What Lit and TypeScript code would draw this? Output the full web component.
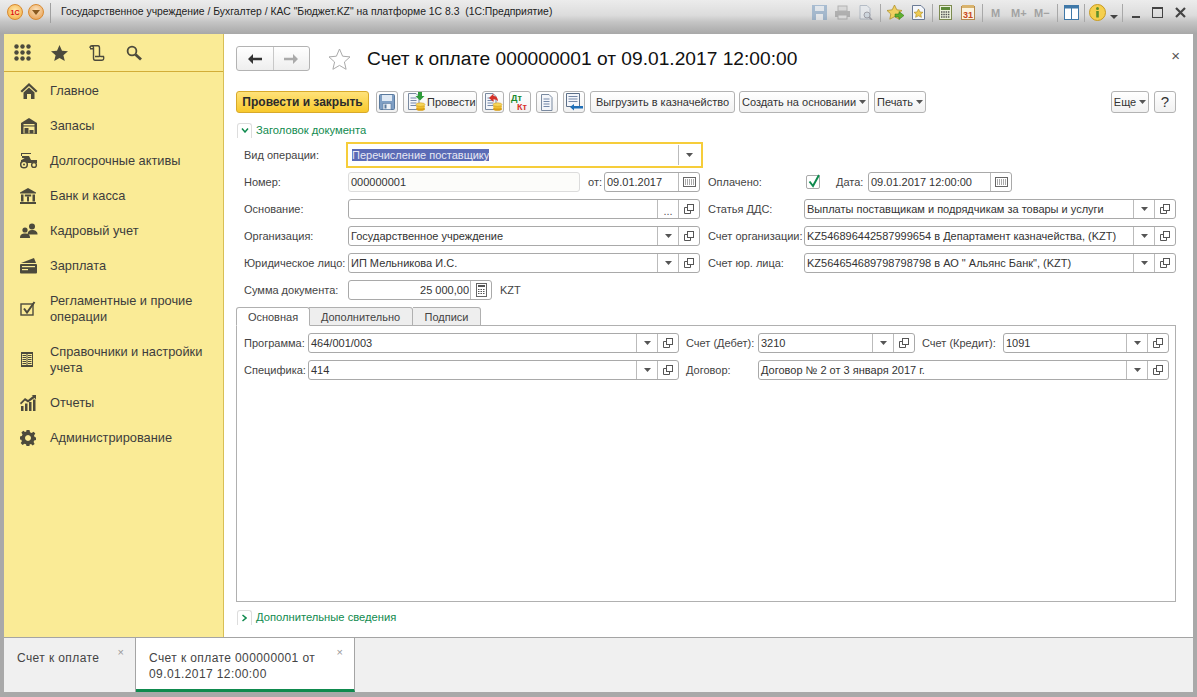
import { LitElement, html, svg, css } from "lit";
import { customElement } from "lit/decorators.js";

const I = "#4c4a3c";
const copyIcon = html`<svg width="12" height="12" viewBox="0 0 12 12" fill="none" stroke="#555"><rect x="4.5" y="1.5" width="6" height="6" fill="#fff"/><path d="M4.5 4.5H1.5V10.5H7.5V7.5"/></svg>`;
const drop = html`<svg width="7" height="4" viewBox="0 0 7 4"><path d="M0 0H7L3.5 4Z" fill="#555"/></svg>`;
const calIcon = html`<svg width="13" height="10" viewBox="0 0 13 10"><rect x=".5" y=".5" width="12" height="9" fill="#fff" stroke="#666"/><path d="M2 3h9M2 5h9M2 7h9" stroke="#555" stroke-dasharray="1 1"/></svg>`;
const calcIcon = html`<svg width="11" height="14" viewBox="0 0 11 14"><rect x=".5" y=".5" width="10" height="13" fill="#fff" stroke="#666"/><path d="M2 3h7" stroke="#555" stroke-width="2"/><path d="M2 6.5h7M2 8.5h7M2 10.5h7" stroke="#555" stroke-dasharray="1.5 1"/></svg>`;

const coins = svg`<ellipse cx="14.5" cy="17" rx="4.5" ry="1.8" fill="#d99f16"/><ellipse cx="14.5" cy="14.8" rx="4.5" ry="1.8" fill="#f0bf30"/><ellipse cx="14.5" cy="12.6" rx="4.5" ry="1.8" fill="#f7d65a" stroke="#c9921a" stroke-width=".5"/>`;
const docBase = svg`<path d="M2.5 1.5H10L13 4.5V17.5H2.5Z" fill="#f4f6fa" stroke="#7a8aa0"/><path d="M4.5 6h6M4.5 8.5h6M4.5 11h6M4.5 13.5h6" stroke="#7488a8"/>`;

const toolIcons = {
  save: html`<svg width="18" height="18" viewBox="0 0 18 18"><rect x="1.5" y="1.5" width="15" height="15" rx="1" fill="#7f9fc4" stroke="#5a7a9e"/><rect x="4" y="2" width="10" height="6" fill="#dfe9f4"/><rect x="5" y="10.5" width="8" height="6" fill="#eef2f7" stroke="#5a7a9e" stroke-width=".6"/><rect x="6.5" y="11.5" width="2" height="4" fill="#5a7a9e"/></svg>`,
  post: html`<svg width="20" height="20" viewBox="0 0 20 20">${docBase}${coins}<path d="M12 0V4H9.5L14 8.5L18.5 4H16V0Z" fill="#2f9b3a"/></svg>`,
  unpost: html`<svg width="20" height="20" viewBox="0 0 20 20">${docBase}${coins}<path d="M6 6L10.5 1.5V4C13.5 4 15 6 15 9.5C14 8 12.5 7.2 10.5 7.2V10Z" fill="#d4322a"/></svg>`,
  dtkt: html`<svg width="20" height="20" viewBox="0 0 20 20"><text class="dt" x="1" y="9">Дт</text><text class="kt" x="7" y="18">Кт</text></svg>`,
  list: html`<svg width="16" height="18" viewBox="0 0 16 18">${docBase}</svg>`,
  out: html`<svg width="20" height="20" viewBox="0 0 20 20"><path d="M2.5 1.5H15.5V14.5H2.5Z" fill="#f4f6fa" stroke="#5c6f88"/><path d="M4.5 4.5h9M4.5 7h9M4.5 9.5h9" stroke="#7488a8"/><path d="M6 15L10 12V14H19V16.5H10V18.5Z" fill="#1f6fb8"/></svg>`,
};

const navIcons = [
  html`<svg width="18" height="18" viewBox="0 0 18 18" fill="${I}"><path d="M9 1L0.5 9L2 10.5L9 4L16 10.5L17.5 9Z"/><path d="M3.5 10.5L9 5.5L14.5 10.5V17H11V12H7V17H3.5Z"/></svg>`,
  html`<svg width="18" height="18" viewBox="0 0 18 18" fill="${I}"><path d="M1 6L9 1L17 6V17H1Z"/><rect x="3.5" y="7" width="11" height="1.4" fill="#faeb96"/><rect x="3.5" y="9.5" width="11" height="7" fill="#faeb96"/><rect x="4.5" y="11" width="4" height="5.5"/><rect x="9.5" y="13" width="4" height="3.5"/></svg>`,
  html`<svg width="18" height="16" viewBox="0 0 18 16"><g fill="${I}"><path d="M1 3H8V1H11V0H1ZM2 1H8V5H2ZM8 3H9L11 7H17V10H1V7H1.5Z"/></g><circle cx="4" cy="11.5" r="3.3" fill="#faeb96" stroke="${I}" stroke-width="1.5"/><circle cx="4" cy="11.5" r="1" fill="${I}"/><circle cx="14" cy="12" r="2.4" fill="#faeb96" stroke="${I}" stroke-width="1.4"/></svg>`,
  html`<svg width="16" height="16" viewBox="0 0 16 16" fill="${I}"><path d="M8 0L16 4.5V5.5H0V4.5Z"/><rect x="1" y="6.5" width="2.5" height="7"/><rect x="12.5" y="6.5" width="2.5" height="7"/><rect x="4.8" y="6.5" width="6.4" height="2"/><rect x="7" y="8.5" width="2" height="5"/><rect y="14" width="16" height="2"/></svg>`,
  html`<svg width="18" height="15" viewBox="0 0 18 15" fill="${I}"><circle cx="12" cy="3.5" r="3"/><path d="M7.5 12C7.5 8.5 9 7 12 7S17.5 8.5 17.5 11V11.5H9.5Z"/><circle cx="5" cy="7" r="2.6"/><path d="M0 15C0 11.5 2 10.5 5 10.5S10 11.5 10 15Z"/></svg>`,
  html`<svg width="17" height="16" viewBox="0 0 17 16" fill="${I}"><path d="M1 5L14 0L16 5Z"/><rect x="0" y="6" width="17" height="9.5" rx="1"/><rect x="2" y="8" width="13" height="1.2" fill="#faeb96"/><rect x="2" y="11" width="6" height="1.2" fill="#faeb96"/></svg>`,
  html`<svg width="16" height="15" viewBox="0 0 16 15" fill="none" stroke="${I}"><rect x="1" y="3" width="12" height="11" stroke-width="1.4"/><path d="M4 7.5L7 11.5L14.5 1" stroke-width="2"/></svg>`,
  html`<svg width="14" height="15" viewBox="0 0 14 15" fill="${I}"><path d="M1 0H13V15H1ZM2 2V13H6.5V2ZM7.5 2V13H12V2Z"/><path d="M2.5 3.5h3.5M2.5 5.5h3.5M2.5 7.5h3.5M2.5 9.5h3.5M2.5 11.5h3.5M8 3.5h3.5M8 5.5h3.5M8 7.5h3.5M8 9.5h3.5M8 11.5h3.5" stroke="${I}"/></svg>`,
  html`<svg width="16" height="16" viewBox="0 0 16 16" fill="${I}"><rect x="1" y="11" width="2.5" height="5"/><rect x="5" y="8.5" width="2.5" height="7.5"/><rect x="9" y="7" width="2.5" height="9"/><rect x="13" y="4.5" width="2.5" height="11.5"/><path d="M0 8L5 3L8 5L13 1L11.5 0H16V4.5L14.5 3L8 7.5L5 5.5L1 9.5Z"/></svg>`,
  html`<svg width="16" height="16" viewBox="0 0 16 16" fill="${I}"><path fill-rule="evenodd" d="M6.5 0H9.5L10 2.2L11.6 2.9L13.6 1.7L15.3 3.6L14 5.5L14.6 7L16 7.5V10L14.2 10.4L13.6 12L14.6 14L12.7 15.4L11 14L9.6 14.4L9.5 16H6.5L6 14.3L4.5 13.7L2.5 15L.7 13.1L1.9 11.2L1.3 9.7L0 9.5V6.5L1.8 6L2.5 4.4L1.4 2.4L3.3 .8L5 2.1L6.3 1.6ZM8 5A3 3 0 1 0 8.01 5Z"/></svg>`,
];

const menu: [string, boolean][] = [
  ["Главное", false], ["Запасы", false], ["Долгосрочные активы", false], ["Банк и касса", false],
  ["Кадровый учет", false], ["Зарплата", false], ["Регламентные и прочие операции", true],
  ["Справочники и настройки учета", true], ["Отчеты", false], ["Администрирование", false],
];

@customElement("app-root")
export class AppRoot extends LitElement {
  static styles = css`
    :host { display: block; width: 1197px; height: 697px; overflow: hidden; font: 11px/16px "Liberation Sans", Arial, sans-serif; color: #333; background: #a9a9a9; }
    * { box-sizing: border-box; }
    .titlebar { height: 34px; display: flex; align-items: flex-start; padding-top: 3px; background: linear-gradient(#ececec 0, #dcdcdc 45%, #c4c4c4 65%, #a8a8a8 100%); }
    .logo { margin-left: 7px; width: 16px; height: 16px; border-radius: 50%; background: radial-gradient(circle at 50% 40%, #ffe9b0, #f5b44c 80%); border: 1px solid #d98a30; display: flex; align-items: center; justify-content: center; font: bold 7px "Liberation Sans", sans-serif; color: #d11; margin-top: 1px; flex: none; }
    .logo.two { margin-left: 5px; background: radial-gradient(circle at 50% 35%, #fbe3bd, #e9a45a 85%); }
    .tsep { width: 1px; height: 20px; background: #a0a0a0; box-sizing: content-box; margin: 0 10px 0 6px; flex: none; }
    .ttl { font-size: 10.4px; line-height: 18px; color: #222; width: 751px; white-space: pre; flex: none; }
    .tools { display: flex; align-items: center; height: 19px; }
    .tools > * { flex: none; }
    .sep { width: 1px; height: 18px; background: #a8a8a8; margin: 0 6px 0 7px; }
    .sep.s4 { margin-left: 4px; }
    .sep.s5 { margin: 0 4px 0 5px; }
    .m { font: bold 11px "Liberation Sans", sans-serif; color: #a2a2a2; }
    .m1 { margin-left: 2px; width: 20px; } .m2 { width: 23px; }
    .faded { opacity: .45; margin-right: 8px; }
    .faded.last { margin-right: 0; }
    .g8 { margin-right: 8px; } .g9 { margin-right: 9px; }
    .ti-drop { margin: 9px 0 0 4px; }
    .ti-min { margin-left: 3px; }
    .ti-g { margin-left: 12px; }
    .body { height: 658px; display: flex; padding: 0 4px; flex-direction: column; }
    .main { height: 603px; display: flex; }
    .side { width: 220px; flex: none; background: #faeb96; border-right: 1px solid #d8bf55; }
    .shead { height: 38px; border-bottom: 1px solid #d2ad38; display: flex; align-items: center; padding-left: 10px; }
    .shead svg { flex: none; }
    .sh20 { margin-left: 20px; } .sh21 { margin-left: 21px; }
    .menu { padding-top: 1px; font-size: 12.8px; color: #3d3d3d; }
    .mi { display: flex; align-items: center; height: 35px; padding-left: 16px; }
    .mi.two { height: 51px; }
    .mi .ic { width: 30px; flex: none; display: flex; align-items: center; }
    .mi .tx { width: 165px; }
    .content { flex: 1; background: #fff; padding: 12px 17px 0 12px; position: relative; }
    .head { display: flex; align-items: center; height: 25px; }
    .nav { width: 74px; height: 25px; border: 1px solid #b3b3b3; border-radius: 3px; display: flex; background: linear-gradient(#fff, #eee); }
    .nav div { flex: 1; display: flex; align-items: center; justify-content: center; }
    .nav div + div { border-left: 1px solid #c8c8c8; }
    .star { margin: 0 16px 0 18px; display: block; flex: none; }
    h1 { font: 19.2px/27px "Liberation Sans", sans-serif; margin: 0; color: #111; white-space: nowrap; }
    .closex { position: absolute; right: 13px; top: 14px; font-size: 15px; color: #555; line-height: 16px; }
    .toolbar { display: flex; margin-top: 20px; height: 22px; gap: 5px; align-items: stretch; }
    .btn { border: 1px solid #b3b3b3; border-radius: 3px; background: linear-gradient(#fff, #f1f1f1); display: flex; align-items: center; justify-content: center; white-space: nowrap; color: #333; gap: 3px; flex: none; height: 22px; }
    .btn.sq { width: 22px; overflow: hidden; }
    .btn.pri { width: 133px; font-size: 12px; background: linear-gradient(#ffe27a, #f8c92c); border-color: #d8a92a; font-weight: bold; color: #2b2b2b; margin-right: 2px; }
    .w74 { width: 74px; justify-content: flex-start; padding-left: 2px; gap: 1px; } .w145 { width: 145px; } .w130 { width: 130px; margin-left: -1px; } .w52 { width: 52px; } .w38 { width: 38px; }
    .grow { margin-left: auto; }
    .btn.q { font-size: 15px; }
    .dt { font: bold 9px "Liberation Sans", sans-serif; fill: #178a2c; }
    .kt { font: bold 9px "Liberation Sans", sans-serif; fill: #d8302a; }
    .sec { display: flex; align-items: center; height: 16px; margin-top: 9px; color: #0f8a4e; gap: 4px; padding-left: 1px; font-size: 11.2px; }
    .chev { width: 15px; height: 15px; border: 1px solid #ddd; border-bottom: none; border-radius: 3px 3px 0 0; display: flex; align-items: center; justify-content: center; }
    .row { display: flex; align-items: center; height: 20px; margin-top: 7px; padding-left: 8px; position: relative; white-space: nowrap; }
    .lbl { color: #444; flex: none; }
    .l104 { width: 104px; }
    .l96 { width: 96px; margin-left: 8px; }
    .fld { height: 20px; border: 1px solid #a9a9a9; border-radius: 3px; display: flex; flex: none; background: #fff; overflow: hidden; }
    .fld .t { flex: 1; padding-left: 2px; line-height: 18px; overflow: hidden; white-space: nowrap; color: #333; }
    .fld .b { width: 21px; flex: none; border-left: 1px solid #bbb; display: flex; align-items: center; justify-content: center; }
    .fld .b.dots { align-items: flex-end; line-height: 12px; color: #555; padding-bottom: 1px; }
    .fld.ro { border-color: #dcdcdc; background: #fcfcfa; }
    .fld .t.r { text-align: right; padding: 0 1px 0 0; }
    .w352 { width: 352px; } .w372 { width: 372px; } .w232 { width: 232px; } .w96 { width: 96px; } .w144 { width: 144px; } .w371 { width: 371px; } .w157 { width: 157px; } .w166 { width: 166px; } .w411 { width: 411px; }
    .first { margin-top: 4px; height: 26px; padding-left: 8px; margin-bottom: -3px; }
    .focus { width: 357px; height: 26px; border: 2px solid #f6cd3a; margin-left: -2px; display: flex; align-items: center; flex: none; padding: 0 2px 0 4px; }
    .focus .val { flex: 1; }
    .sel { background: #5b6bb6; color: #e8e8f4; }
    .focus .b { width: 21px; height: 20px; border-left: 1px solid #bbb; display: flex; align-items: center; justify-content: center; flex: none; }
    .ot { margin-left: 8px; width: 16px; color: #444; flex: none; }
    .ot2 { width: 32px; color: #444; flex: none; }
    .chk { width: 14px; height: 14px; border: 1px solid #aaa; border-radius: 2px; margin: 0 16px 0 2px; position: relative; flex: none; }
    .chk svg { position: absolute; left: 0; top: -3px; }
    .kzt { margin-left: 8px; color: #444; }
    .tabs { display: flex; margin-top: 7px; height: 19px; }
    .tab { height: 19px; border: 1px solid #b0b0b0; border-left: none; border-radius: 0 3px 0 0; background: #eee; display: flex; align-items: center; justify-content: center; color: #444; }
    .tab.on { background: #fff; border-left: 1px solid #b0b0b0; border-bottom: 1px solid #fff; border-radius: 3px 3px 0 0; width: 74px; position: relative; z-index: 1; }
    .t104 { width: 104px; margin-left: -1px; } .t67 { width: 68px; }
    .panel { height: 277px; border: 1px solid #b0b0b0; margin-top: -1px; padding-top: 7px; }
    .panel .row { padding-left: 7px; }
    .panel .row:first-child { margin-top: 0; }
    .l64 { width: 64px; } .l72 { width: 72px; margin-left: 7px; } .l81 { width: 81px; margin-left: 7px; }
    .sec2 { margin-top: 7px; }
    .strip { height: 55px; display: flex; background: #f0f0f0; border-top: 1px solid #a4a4a4; color: #444; font-size: 12px; }
    .wt { position: relative; padding: 12px 0 0 13px; width: 132px; border-right: 1px solid #a4a4a4; letter-spacing: .4px; flex: none; }
    .wt.on { width: 219px; background: #fff; border-bottom: 3px solid #0f8a4e; }
    .wt .x { position: absolute; right: 11px; top: 6px; font-size: 11px; color: #999; letter-spacing: 0; }
  `;

  private fld(text: string, w: string, btns: ("drop" | "copy" | "dots" | "cal" | "calc")[] = [], extra = "") {
    return html`<div class="fld ${w} ${extra}"><div class="t">${text}</div>${btns.map((b) =>
      b === "dots" ? html`<div class="b dots">...</div>` : html`<div class="b">${b === "drop" ? drop : b === "copy" ? copyIcon : b === "cal" ? calIcon : calcIcon}</div>`)}</div>`;
  }

  render() {
    return html`
      <div class="titlebar">
        <div class="logo">1C</div>
        <div class="logo two"><svg width="8" height="5" viewBox="0 0 8 5"><path d="M0 0H8L4 5Z" fill="#8a5a20"/></svg></div>
        <div class="tsep"></div>
        <div class="ttl">Государственное учреждение / Бухгалтер / КАС "Бюджет.KZ" на платформе 1С 8.3  (1С:Предприятие)</div>
        <div class="tools">
          <svg class="faded" width="15" height="15" viewBox="0 0 15 15"><rect width="15" height="15" fill="#5f8bb8"/><rect x="3" y="1" width="9" height="5" fill="#dfe9f4"/><rect x="4" y="9" width="7" height="6" fill="#eef2f7"/></svg>
          <svg class="faded" width="15" height="15" viewBox="0 0 15 15"><rect x="3" y="1" width="9" height="5" fill="#ccc" stroke="#777"/><rect x="0" y="6" width="15" height="6" fill="#777"/><rect x="3" y="10" width="9" height="4" fill="#ddd" stroke="#777"/></svg>
          <svg class="faded last" width="15" height="15" viewBox="0 0 15 15"><path d="M2 .5H9L12 3.5V14H2Z" fill="#e8eef5" stroke="#7a8aa0"/><circle cx="9" cy="10" r="3" fill="#bcd" stroke="#556"/><path d="M11 12L14 15" stroke="#556" stroke-width="1.6"/></svg>
          <div class="sep"></div>
          <svg class="g8" width="17" height="17" viewBox="0 0 17 17"><path d="M7.5 1L9.8 5.8L15 6.5L11.2 10L12.2 15.2L7.5 12.7L2.8 15.2L3.8 10L0 6.5L5.2 5.8Z" fill="#f0d060" stroke="#a98a20" stroke-width=".7"/><path d="M8 12V10H12V7.5L17 11.5L12 15.5V13H8Z" fill="#5fb030" stroke="#2a7010" stroke-width=".5"/></svg>
          <svg width="13" height="15" viewBox="0 0 13 15"><path d="M.5 .5H9L12.5 4V14.5H.5Z" fill="#f4f6fa" stroke="#6a7a95"/><path d="M6.5 4L8 7L11 7.3L8.8 9.3L9.4 12.3L6.5 10.8L3.6 12.3L4.2 9.3L2 7.3L5 7Z" fill="#efcb52" stroke="#a98a20" stroke-width=".6"/></svg>
          <div class="sep"></div>
          <svg class="g9" width="13" height="15" viewBox="0 0 13 15"><rect x=".5" y=".5" width="12" height="14" fill="#ecf1dc" stroke="#7c8a50"/><rect x="2" y="2" width="9" height="3" fill="#5e8a3a"/><path d="M2 7h9M2 9.5h9M2 12h9" stroke="#555" stroke-width="1.4" stroke-dasharray="1.5 .8"/></svg>
          <svg width="14" height="15" viewBox="0 0 14 15"><rect x=".5" y="1.5" width="13" height="13" fill="#fbf3df" stroke="#b38a50"/><rect x="1" y="0" width="12" height="3" fill="#d9b36c"/><text class="cal31" x="2" y="13" font-family="Liberation Sans" font-size="9" font-weight="bold" fill="#c8481c">31</text></svg>
          <div class="sep"></div>
          <span class="m m1">M</span><span class="m m2">M+</span><span class="m">M−</span>
          <div class="sep"></div>
          <svg width="15" height="15" viewBox="0 0 15 15"><rect x=".5" y=".5" width="14" height="14" fill="#fff" stroke="#3f78a8"/><rect x="1" y="1" width="13" height="2.5" fill="#3f78a8"/><path d="M7.5 3V14" stroke="#3f78a8"/></svg>
          <div class="sep s5"></div>
          <svg width="17" height="17" viewBox="0 0 17 17"><circle cx="8.5" cy="8.5" r="8" fill="#f5cf4d" stroke="#c79a20"/><circle cx="8.5" cy="4.5" r="1.5" fill="#5f8f2a"/><rect x="7.2" y="7" width="2.6" height="6.5" fill="#5f8f2a"/></svg>
          <svg class="ti-drop" width="8" height="4" viewBox="0 0 8 4"><path d="M0 0H8L4 4Z" fill="#444"/></svg>
          <div class="sep s4"></div>
          <svg class="ti-min" width="8" height="16" viewBox="0 0 8 16"><rect y="11" width="8" height="2" fill="#444"/></svg>
          <svg class="ti-g" width="11" height="11" viewBox="0 0 11 11" fill="none" stroke="#444" stroke-width="1"><rect x=".5" y=".5" width="10" height="10"/><path d="M0 1.5H11"/></svg>
          <svg class="ti-g" width="11" height="11" viewBox="0 0 11 11" stroke="#444" stroke-width="2.2"><path d="M1 1L10 10M10 1L1 10"/></svg>
        </div>
      </div>
      <div class="body">
        <div class="main">
          <aside class="side">
            <div class="shead">
              <svg width="17" height="17" viewBox="0 0 17 17" fill="${I}"><circle cx="2.5" cy="2.5" r="2.2"/><circle cx="8.5" cy="2.5" r="2.2"/><circle cx="14.5" cy="2.5" r="2.2"/><circle cx="2.5" cy="8.5" r="2.2"/><circle cx="8.5" cy="8.5" r="2.2"/><circle cx="14.5" cy="8.5" r="2.2"/><circle cx="2.5" cy="14.5" r="2.2"/><circle cx="8.5" cy="14.5" r="2.2"/><circle cx="14.5" cy="14.5" r="2.2"/></svg>
              <svg class="sh20" width="17" height="16" viewBox="0 0 17 16" fill="${I}"><path d="M8.5 0L11 5.7L17 6.2L12.4 10.2L13.8 16L8.5 13L3.2 16L4.6 10.2L0 6.2L6 5.7Z"/></svg>
              <svg class="sh21" width="16" height="16" viewBox="0 0 16 16" fill="none" stroke="${I}" stroke-width="1.4"><path d="M1 3C1 1 2 .8 3 .8H9C10.2 .8 10.5 2 10.5 3V10.5C10.5 11 11 11.5 12 11.5H14.5C15.5 14.5 14 15.3 12.5 15.3H6C5 15.3 4.5 14 4.5 13V3C4.5 2 4 1 3 1M1 3.8H4.5M6 11.5H10.5"/></svg>
              <svg class="sh21" width="16" height="16" viewBox="0 0 16 16" fill="none" stroke="${I}"><circle cx="6" cy="6" r="4.4" stroke-width="1.8"/><path d="M9.5 9.5L15 14.5" stroke-width="2.8"/></svg>
            </div>
            <div class="menu">
              ${menu.map(([t, two], i) => html`<div class="mi ${two ? "two" : ""}"><div class="ic">${navIcons[i]}</div><div class="tx">${t}</div></div>`)}
            </div>
          </aside>
          <section class="content">
            <div class="head">
              <div class="nav">
                <div><svg width="14" height="10" viewBox="0 0 14 10"><path d="M0 5L5 0V3.7H14V6.3H5V10Z" fill="#333"/></svg></div>
                <div><svg width="14" height="10" viewBox="0 0 14 10"><path d="M14 5L9 0V3.7H0V6.3H9V10Z" fill="#aaa"/></svg></div>
              </div>
              <svg class="star" width="23" height="22" viewBox="0 0 23 22"><path d="M11.5 1L14.6 8.2L22 8.9L16.4 14L18.1 21.3L11.5 17.4L4.9 21.3L6.6 14L1 8.9L8.4 8.2Z" fill="#fff" stroke="#aaa"/></svg>
              <h1>Счет к оплате 000000001 от 09.01.2017 12:00:00</h1>
            </div>
            <div class="closex">×</div>
            <div class="toolbar">
              <div class="btn pri">Провести и закрыть</div>
              <div class="btn sq">${toolIcons.save}</div>
              <div class="btn w74">${toolIcons.post}Провести</div>
              <div class="btn sq">${toolIcons.unpost}</div>
              <div class="btn sq">${toolIcons.dtkt}</div>
              <div class="btn sq">${toolIcons.list}</div>
              <div class="btn sq">${toolIcons.out}</div>
              <div class="btn w145">Выгрузить в казначейство</div>
              <div class="btn w130">Создать на основании ${drop}</div>
              <div class="btn w52">Печать ${drop}</div>
              <div class="btn w38 grow">Еще ${drop}</div>
              <div class="btn sq q">?</div>
            </div>
            <div class="sec">
              <div class="chev"><svg width="8" height="5" viewBox="0 0 8 5" fill="none" stroke="#0f8a4e" stroke-width="1.5"><path d="M1 .5L4 4L7 .5"/></svg></div>
              Заголовок документа
            </div>
            <div class="row first">
              <div class="lbl l104">Вид операции:</div>
              <div class="focus"><div class="val"><span class="sel">Перечисление поставщику</span></div><div class="b">${drop}</div></div>
            </div>
            <div class="row">
              <div class="lbl l104">Номер:</div>
              ${this.fld("000000001", "w232", [], "ro")}
              <span class="ot">от:</span>
              ${this.fld("09.01.2017", "w96", ["cal"])}
              <div class="lbl l96">Оплачено:</div>
              <div class="chk"><svg width="14" height="16" viewBox="0 0 14 16" fill="none" stroke="#0f8a4e" stroke-width="2"><path d="M2.5 8.5L6 13L12 2"/></svg></div>
              <span class="ot2">Дата:</span>
              ${this.fld("09.01.2017 12:00:00", "w144", ["cal"])}
            </div>
            <div class="row">
              <div class="lbl l104">Основание:</div>
              ${this.fld("", "w352", ["dots", "copy"])}
              <div class="lbl l96">Статья ДДС:</div>
              ${this.fld("Выплаты поставщикам и подрядчикам за товары и услуги", "w372", ["drop", "copy"])}
            </div>
            <div class="row">
              <div class="lbl l104">Организация:</div>
              ${this.fld("Государственное учреждение", "w352", ["drop", "copy"])}
              <div class="lbl l96">Счет организации:</div>
              ${this.fld("KZ546896442587999654 в Департамент казначейства, (KZT)", "w372", ["drop", "copy"])}
            </div>
            <div class="row">
              <div class="lbl l104">Юридическое лицо:</div>
              ${this.fld("ИП Мельникова И.С.", "w352", ["drop", "copy"])}
              <div class="lbl l96">Счет юр. лица:</div>
              ${this.fld('KZ564654689798798798 в АО " Альянс Банк", (KZT)', "w372", ["drop", "copy"])}
            </div>
            <div class="row">
              <div class="lbl l104">Сумма документа:</div>
              <div class="fld w144"><div class="t r">25 000,00</div><div class="b">${calcIcon}</div></div>
              <span class="kzt">KZT</span>
            </div>
            <div class="tabs">
              <div class="tab on">Основная</div>
              <div class="tab t104">Дополнительно</div>
              <div class="tab t67">Подписи</div>
            </div>
            <div class="panel">
              <div class="row">
                <div class="lbl l64">Программа:</div>
                ${this.fld("464/001/003", "w371", ["drop", "copy"])}
                <div class="lbl l72">Счет (Дебет):</div>
                ${this.fld("3210", "w157", ["drop", "copy"])}
                <div class="lbl l81">Счет (Кредит):</div>
                ${this.fld("1091", "w166", ["drop", "copy"])}
              </div>
              <div class="row">
                <div class="lbl l64">Специфика:</div>
                ${this.fld("414", "w371", ["drop", "copy"])}
                <div class="lbl l72">Договор:</div>
                ${this.fld("Договор № 2 от 3 января 2017 г.", "w411", ["drop", "copy"])}
              </div>
            </div>
            <div class="sec sec2">
              <div class="chev"><svg width="5" height="8" viewBox="0 0 5 8" fill="none" stroke="#0f8a4e" stroke-width="1.5"><path d="M.5 1L4 4L.5 7"/></svg></div>
              Дополнительные сведения
            </div>
          </section>
        </div>
        <div class="strip">
          <div class="wt">Счет к оплате<span class="x">×</span></div>
          <div class="wt on">Счет к оплате 000000001 от<br />09.01.2017 12:00:00<span class="x">×</span></div>
        </div>
      </div>
    `;
  }
}
